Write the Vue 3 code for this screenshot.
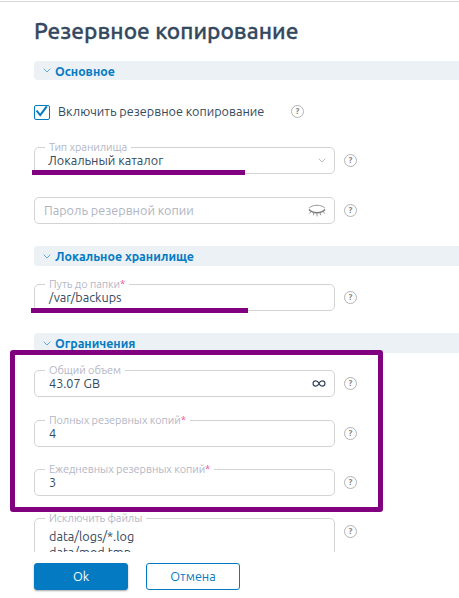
<template>
  <div class="page">
    <div class="form-body">
      <h1 class="title">Резервное копирование</h1>

      <template v-for="section in sections" :key="section.title">
        <div class="section-header" :class="section.name">
          <svg class="chevron" viewBox="0 0 8 5"><path d="M.7.7 4 4 7.3.7" /></svg>
          <span class="section-title">{{ section.title }}</span>
        </div>

        <div v-if="section.name === 'main'" class="check-row">
          <button class="checkbox" :class="{ checked: enabled }" @click="enabled = !enabled">
            <svg v-if="enabled" viewBox="0 0 14 13"><path d="M1.5 4.5 5.2 9.2 11.8.3" /></svg>
          </button>
          <span class="check-label">Включить резервное копирование</span>
          <span class="help">?</span>
        </div>

        <div class="fields" :class="section.name">
          <div v-for="field in section.fields" :key="field.name" class="field-row">
            <div class="field" :class="field.name">
              <span v-if="field.label" class="field-label">
                <span class="label-text">{{ field.label }}</span><span v-if="field.required" class="required">*</span>
              </span>
              <span v-if="field.placeholder" class="placeholder">{{ field.placeholder }}</span>
              <span v-else class="value">{{ field.value }}</span>

              <svg v-if="field.icon === 'chevron'" class="chevron select" viewBox="0 0 8 5">
                <path d="M.7.7 4 4 7.3.7" />
              </svg>
              <svg v-if="field.icon === 'eye'" class="eye" viewBox="0 0 18 13">
                <path d="M1 4.2C4.5.3 13.5.3 17 4.2" />
                <path class="lid" d="M1 5.5C4.5 9.8 13.5 9.8 17 5.5" />
                <path d="M3.2 7 1.5 9.5M6 8.3 5.3 11.2M9 8.8V12.4M12 8.3 12.7 11.2M14.800 7 16.5 9.5" />
              </svg>
              <svg v-if="field.icon === 'infinity'" class="infinity" viewBox="0 0 14 7">
                <path d="M7 3.5C6.2 1.700 5.300.8 3.800.8a2.700 2.700 0 0 0 0 5.400C5.300 6.200 6.200 5.300 7 3.500S8.700.8 10.200.8a2.700 2.700 0 0 1 0 5.400C8.700 6.200 7.800 5.300 7 3.500Z" />
              </svg>
            </div>
            <span class="help">?</span>
          </div>
        </div>
      </template>
    </div>

    <div class="actions">
      <button class="btn primary">Ok</button>
      <button class="btn">Отмена</button>
    </div>

    <div class="mark storage-mark"></div>
    <div class="mark path-mark"></div>
    <div class="mark-frame"></div>
  </div>
</template>

<script setup>
import { ref } from 'vue'

const enabled = ref(true)

const sections = [
  {
    name: 'main',
    title: 'Основное',
    fields: [
      { name: 'type', label: 'Тип хранилища', value: 'Локальный каталог', icon: 'chevron' },
      { name: 'password', placeholder: 'Пароль резервной копии', icon: 'eye' }
    ]
  },
  {
    name: 'local',
    title: 'Локальное хранилище',
    fields: [
      { name: 'path', label: 'Путь до папки', value: '/var/backups', required: true }
    ]
  },
  {
    name: 'limits',
    title: 'Ограничения',
    fields: [
      { name: 'total', label: 'Общий объем', value: '43.07 GB', icon: 'infinity' },
      { name: 'full', label: 'Полных резервных копий', value: '4', required: true },
      { name: 'daily', label: 'Ежедневных резервных копий', value: '3', required: true },
      { name: 'exclude', label: 'Исключить файлы', value: 'data/logs/*.log\ndata/mod.tmp' }
    ]
  }
]
</script>

<style>
body {
  background: #fff;
  overflow: hidden;
}
</style>

<style scoped>
.page {
  position: relative;
  box-sizing: border-box;
  height: 598px;
  padding-top: 1px;
  overflow: hidden;
  font-family: Ubuntu, "Noto Sans", sans-serif;
  font-size: 12.65px;
  color: #34495e;
}

.form-body {
  box-sizing: border-box;
  height: 551px;
  padding-left: 34px;
  border-top: 1px solid #d5d8d8;
  overflow: hidden;
}

.title {
  margin: 14px 0 15px;
  height: 30px;
  line-height: 30px;
  font-size: 22.7px;
  font-weight: 500;
  -webkit-text-stroke: 0.3px #34495e;
  white-space: nowrap;
}

.section-header {
  display: flex;
  align-items: center;
  height: 20px;
  padding-left: 9px;
  border-radius: 4px 0 0 4px;
  background: #ecf1f6;
}

.section-header.main {
  height: 19px;
}

.section-title {
  margin-left: 4px;
  line-height: 18px;
  font-size: 12.4px;
  font-weight: 600;
  color: #047ac3;
}

.chevron {
  width: 8px;
  height: 5px;
  fill: none;
  stroke: #3b9bd3;
  stroke-width: 0.8;
}

.chevron.select {
  margin-left: auto;
  stroke: #a5aab8;
}

.check-row {
  display: flex;
  align-items: center;
  height: 15px;
  margin-top: 25px;
}

.checkbox {
  box-sizing: border-box;
  width: 16px;
  height: 15px;
  padding: 0;
  border: 1px solid #047ac3;
  border-radius: 2px;
  background: #fff;
}

.checkbox svg {
  display: block;
  width: 14px;
  height: 13px;
  fill: none;
  stroke: #047ac3;
  stroke-width: 2;
}

.check-label {
  width: 233px;
  margin-left: 8px;
  line-height: 15px;
  margin-top: -2px;
  white-space: nowrap;
}

.help {
  box-sizing: border-box;
  flex-shrink: 0;
  width: 13px;
  height: 13px;
  border: 1px solid #b3b3b3;
  border-radius: 50%;
  line-height: 11px;
  font-size: 9px;
  font-weight: 700;
  text-align: center;
  color: #888;
}

.check-row .help {
  margin-top: -2px;
}

.fields {
  display: flex;
  flex-direction: column;
  gap: 22px;
  padding-top: 18px;
}

.fields.main {
  gap: 23px;
  padding-top: 27px;
  padding-bottom: 22px;
}

.fields.local {
  padding-bottom: 22px;
}

.fields.limits {
  padding-top: 17px;
}

.field-row {
  display: flex;
  gap: 9px;
}

.field-row .help {
  margin-top: 7px;
}

.field {
  position: relative;
  box-sizing: border-box;
  display: flex;
  align-items: center;
  width: 301px;
  height: 27px;
  padding: 0 8px 0 14px;
  border: 1px solid #d3d3d5;
  border-radius: 5px;
}

.field.total {
  margin-bottom: 1px;
}

.field.type {
  padding-left: 13px;
}

.field.password {
  padding-left: 9px;
}

.field.exclude {
  height: 70px;
  align-items: flex-start;
  padding-top: 10px;
}

.field.exclude .value {
  padding: 0;
  margin-top: -1px;
  line-height: 16px;
}

.field-label {
  position: absolute;
  top: -8px;
  left: 10px;
  display: flex;
  padding: 0 4px;
  background: #fff;
  line-height: 15px;
  font-size: 11px;
  letter-spacing: -0.08px;
  color: #b4b7c6;
  white-space: nowrap;
}

.required {
  color: #ee4b91;
}

.value {
  padding-bottom: 2px;
  white-space: pre;
}

.placeholder {
  padding-bottom: 2px;
  color: #afb4c2;
}

.eye {
  width: 18px;
  height: 13px;
  margin-left: auto;
  fill: none;
  stroke: #999;
  stroke-width: 1;
}

.eye .lid {
  stroke: #777;
  stroke-width: 1.3;
}

.infinity {
  width: 14px;
  height: 7px;
  margin-left: auto;
  fill: none;
  stroke: #34495e;
  stroke-width: 1.2;
}

.actions {
  display: flex;
  gap: 18px;
  padding: 11px 0 0 34px;
}

.btn {
  box-sizing: border-box;
  width: 94px;
  height: 27px;
  padding: 0 0 1px;
  border: 1px solid #047ac3;
  border-radius: 3px;
  background: #fff;
  font: inherit;
  color: #047ac3;
}

.btn.primary {
  background: #047ac3;
  color: #fff;
  box-shadow: 0 1px 2px rgba(0, 0, 0, 0.35);
}

.mark {
  position: absolute;
  height: 5px;
  background: #800080;
}

.storage-mark {
  top: 170px;
  left: 32px;
  width: 213px;
}

.path-mark {
  top: 308px;
  left: 31px;
  width: 217px;
}

.mark-frame {
  position: absolute;
  top: 350px;
  left: 10px;
  box-sizing: border-box;
  width: 373px;
  height: 162px;
  border: 5px solid #800080;
  border-radius: 3px;
}
</style>
